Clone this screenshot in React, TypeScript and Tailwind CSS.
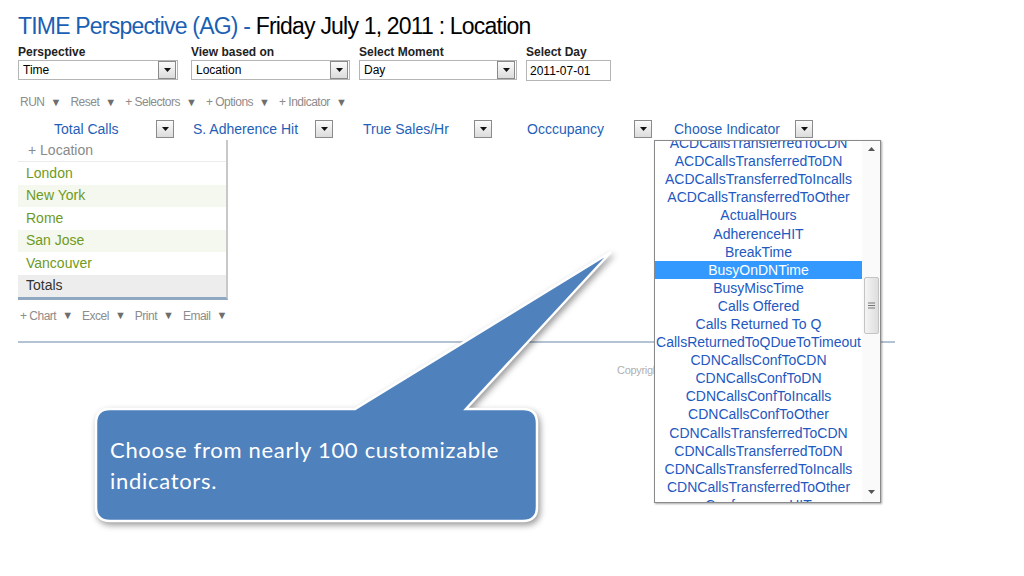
import React from "react";

const indicators = [
  "ACDCallsTransferredToCDN",
  "ACDCallsTransferredToDN",
  "ACDCallsTransferredToIncalls",
  "ACDCallsTransferredToOther",
  "ActualHours",
  "AdherenceHIT",
  "BreakTime",
  "BusyOnDNTime",
  "BusyMiscTime",
  "Calls Offered",
  "Calls Returned To Q",
  "CallsReturnedToQDueToTimeout",
  "CDNCallsConfToCDN",
  "CDNCallsConfToDN",
  "CDNCallsConfToIncalls",
  "CDNCallsConfToOther",
  "CDNCallsTransferredToCDN",
  "CDNCallsTransferredToDN",
  "CDNCallsTransferredToIncalls",
  "CDNCallsTransferredToOther",
  "ConformanceHIT",
];

const locations = ["London", "New York", "Rome", "San Jose", "Vancouver"];

function Arrow({ className = "" }: { className?: string }) {
  return (
    <span
      className={`flex h-[18px] w-[18px] items-center justify-center border border-[#8a8a8a] bg-gradient-to-b from-[#fbfbfb] to-[#dcdcdc] ${className}`}
    >
      <svg width="7" height="4" viewBox="0 0 7 4">
        <path d="M0 0h7L3.5 4z" fill="#111" />
      </svg>
    </span>
  );
}

function SelectBox({ value, width }: { value: string; width: string }) {
  return (
    <div
      className={`flex h-[20px] items-center justify-between border border-[#b5b5b5] bg-white pl-[4px] pr-[1px] ${width}`}
    >
      <span className="text-[12px] text-black">{value}</span>
      <Arrow className="h-[16px] w-[17px]" />
    </div>
  );
}

function Field({
  label,
  children,
  width,
}: {
  label: string;
  children: React.ReactNode;
  width: string;
}) {
  return (
    <div className={`flex flex-col ${width}`}>
      <span className="h-[15px] text-[12px] font-bold leading-[15px] text-[#222]">{label}</span>
      {children}
    </div>
  );
}

function MenuItem({ text }: { text: string }) {
  return (
    <span className="flex items-center gap-[6px]">
      {text}
      <span className="text-[11px] tracking-normal text-[#6e6e6e]">▼</span>
    </span>
  );
}

function Indicator({ label, width }: { label: string; width: string }) {
  return (
    <div className={`flex items-center ${width}`}>
      <span className="text-[14px] text-[#1f5fb8]">{label}</span>
    </div>
  );
}

export default function App() {
  return (
    <div className="relative h-[576px] w-[1024px] overflow-hidden bg-white font-['Liberation_Sans',Arial,sans-serif]">
      <div className="flex flex-col pl-[18px] pt-[12px]">
        <h1 className="h-[30px] text-[23px] leading-[28px] tracking-[-0.8px]">
          <span className="text-[#1a5fb4]">TIME Perspective (AG) - </span>
          <span className="text-black">Friday July 1, 2011 : Location</span>
        </h1>

        <div className="mt-[3px] flex">
          <Field label="Perspective" width="w-[173px]">
            <SelectBox value="Time" width="w-[160px]" />
          </Field>
          <Field label="View based on" width="w-[168px]">
            <SelectBox value="Location" width="w-[159px]" />
          </Field>
          <Field label="Select Moment" width="w-[167px]">
            <SelectBox value="Day" width="w-[158px]" />
          </Field>
          <Field label="Select Day" width="w-[90px]">
            <div className="flex h-[21px] w-[85px] items-center border border-[#b5b5b5] pl-[3px] text-[12px] text-black">
              2011-07-01
            </div>
          </Field>
        </div>

        <div className="mt-[13px] flex h-[16px] items-center gap-[9px] pl-[2px] text-[12px] tracking-[-0.5px] text-[#8c8c8c]">
          <MenuItem text="RUN" />
          <MenuItem text="Reset" />
          <MenuItem text="+ Selectors" />
          <MenuItem text="+ Options" />
          <MenuItem text="+ Indicator" />
        </div>

        <div className="mt-[9px] flex h-[20px] items-center">
          <div className="w-[36px]" />
          <Indicator label="Total Calls" width="w-[102px]" />
          <Arrow />
          <div className="w-[19px]" />
          <Indicator label="S. Adherence Hit" width="w-[122px]" />
          <Arrow />
          <div className="w-[30px]" />
          <Indicator label="True Sales/Hr" width="w-[111px]" />
          <Arrow />
          <div className="w-[35px]" />
          <Indicator label="Occcupancy" width="w-[107px]" />
          <Arrow />
          <div className="w-[22px]" />
          <Indicator label="Choose Indicator" width="w-[121px]" />
          <Arrow />
        </div>

        <div className="mt-[1px] flex w-[210px] flex-col border-r-2 border-b-[3px] border-r-[#c8c8c8] border-b-[#8fa7c0] text-[14px]">
          <div className="flex h-[22px] items-center border-b border-[#ececec] pl-[10px] text-[#8a8a8a]">
            + Location
          </div>
          {locations.map((loc, i) => (
            <div
              key={loc}
              className={`flex h-[22.5px] items-center pl-[8px] text-[#6f9a22] ${
                i % 2 === 1 ? "bg-[#f4f8ee]" : "bg-white"
              }`}
            >
              {loc}
            </div>
          ))}
          <div className="flex h-[22px] items-center bg-[#ededed] pl-[8px] text-[#333]">Totals</div>
        </div>

        <div className="mt-[8px] flex h-[16px] items-center gap-[9px] pl-[2px] text-[12px] tracking-[-0.5px] text-[#8c8c8c]">
          <MenuItem text="+ Chart" />
          <MenuItem text="Excel" />
          <MenuItem text="Print" />
          <MenuItem text="Email" />
        </div>

        <div className="mt-[17px] h-[2px] w-[877px] bg-[#b3c3d4]" />

        <div className="mt-[19px] pl-[599px] text-[11px] tracking-[-0.3px] text-[#b0b0b0]">
          Copyright © 2011
        </div>
      </div>

      {/* indicator dropdown list */}
      <div className="absolute left-[654px] top-[140px] flex h-[363px] w-[227px] overflow-hidden border border-[#8a8a8a] bg-white shadow-[1px_1px_2px_rgba(0,0,0,0.35)]">
        <div className="h-full flex-1 overflow-hidden">
          <div className="-mt-[7px] flex flex-col">
            {indicators.map((it) => (
              <div
                key={it}
                className={`flex h-[18.1px] items-center justify-center text-[14px] leading-[18px] ${
                  it === "BusyOnDNTime" ? "bg-[#3399ff] text-white" : "text-[#2358c0]"
                }`}
              >
                {it}
              </div>
            ))}
          </div>
        </div>
        <div className="relative flex h-full w-[18px] flex-col items-center bg-[#fafafa]">
          <svg className="mt-[6px]" width="7" height="4" viewBox="0 0 7 4">
            <path d="M3.5 0L7 4H0z" fill="#555" />
          </svg>
          <div className="absolute left-[2px] top-[136px] flex h-[57px] w-[15px] items-center justify-center rounded-[2px] border border-[#c4c4c4] bg-gradient-to-r from-[#f4f4f4] to-[#dedede]">
            <svg width="7" height="7" viewBox="0 0 7 7">
              <path d="M0 1h7M0 3.5h7M0 6h7" stroke="#777" strokeWidth="1" />
            </svg>
          </div>
          <svg className="absolute bottom-[8px]" width="7" height="4" viewBox="0 0 7 4">
            <path d="M0 0h7L3.5 4z" fill="#555" />
          </svg>
        </div>
      </div>

      {/* callout */}
      <svg
        className="pointer-events-none absolute left-0 top-0 drop-shadow-[2px_3px_3px_rgba(0,0,0,0.4)]"
        width="1024"
        height="576"
        viewBox="0 0 1024 576"
      >
        <path
          d="M110 409 L355 409 L611 252 L466 409 L523 409 Q537 409 537 423 L537 507 Q537 521 523 521 L110 521 Q96 521 96 507 L96 423 Q96 409 110 409 Z"
          fill="#4f81bd"
          stroke="#fff"
          strokeWidth="2.5"
          strokeLinejoin="miter"
        />
      </svg>
      <div className="pointer-events-none absolute left-[110px] top-[434px] text-[22px] leading-[31px] tracking-[0.7px] text-white font-['Lato','Open_Sans',sans-serif]">
        Choose from nearly 100 customizable
        <br />
        indicators.
      </div>
    </div>
  );
}
